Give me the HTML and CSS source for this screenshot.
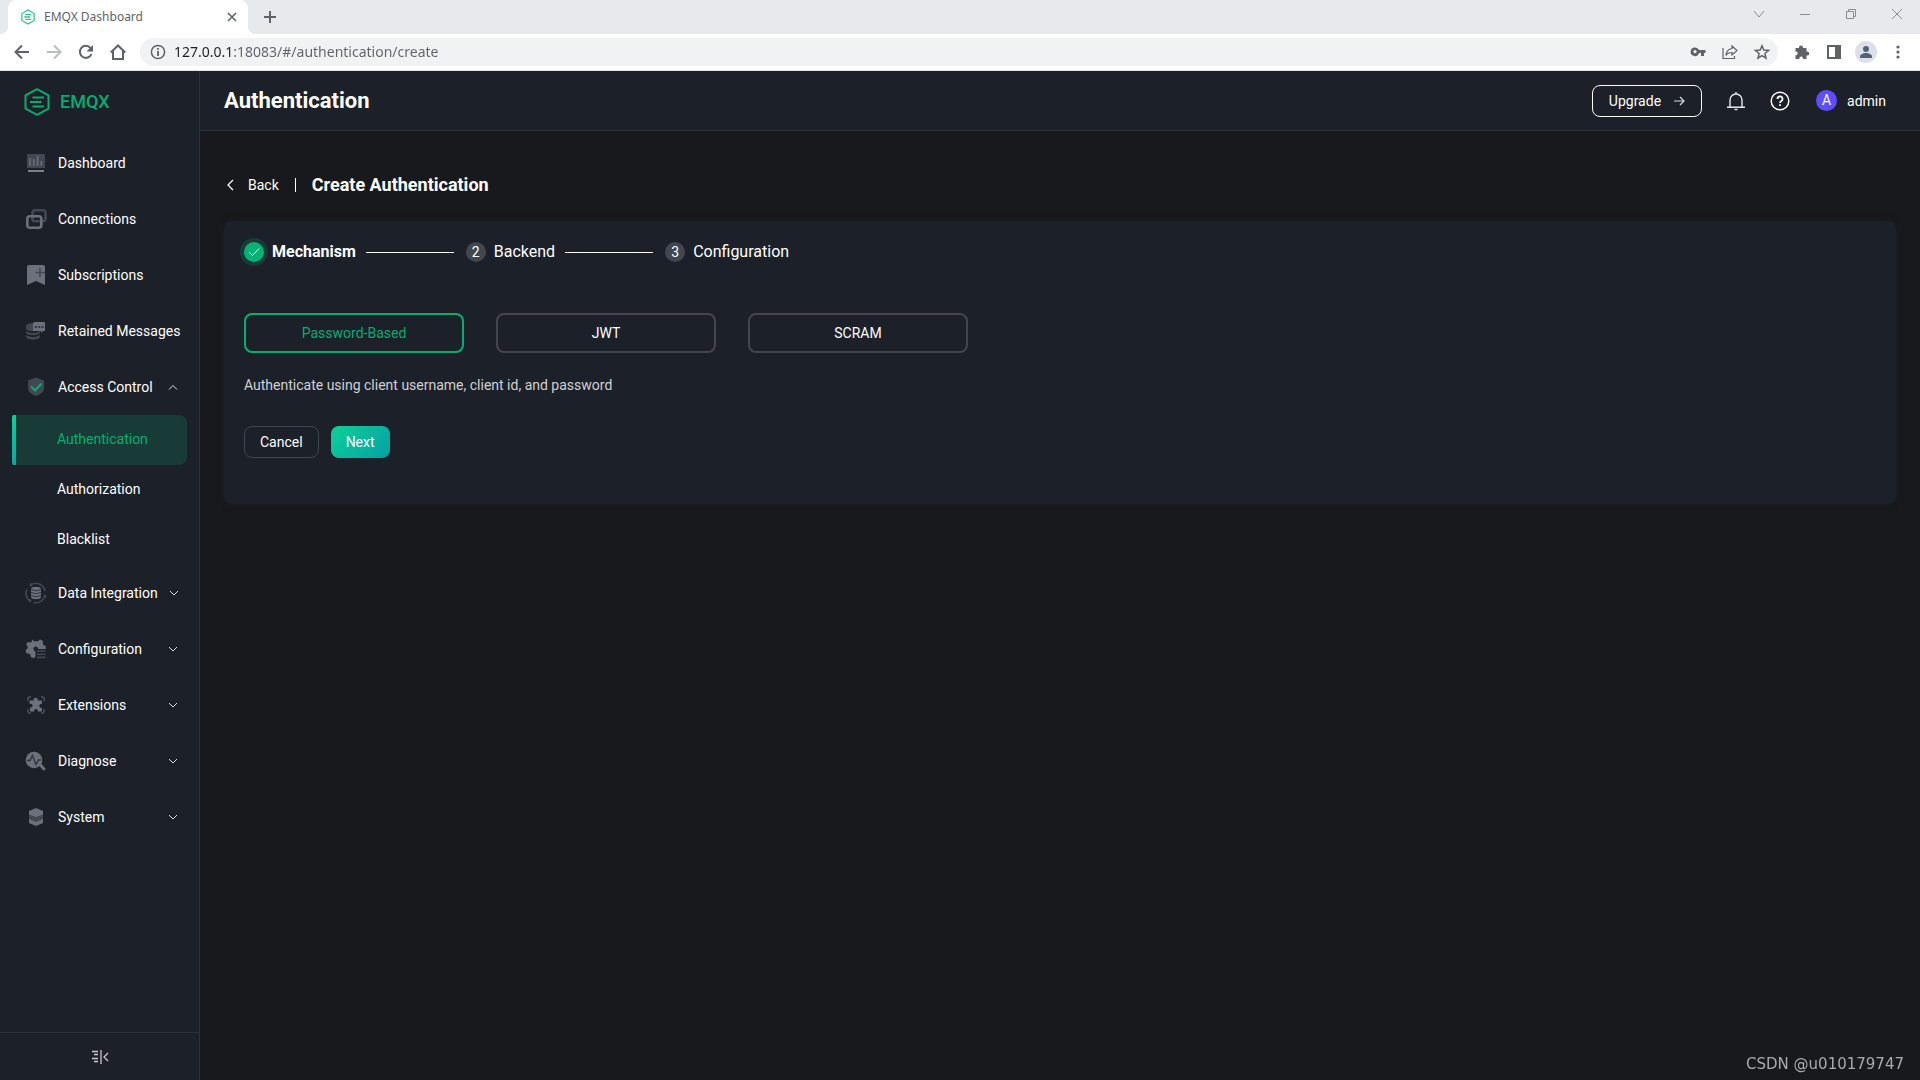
FILE: index.html
```html
<!DOCTYPE html>
<html lang="en">
<head>
    <meta charset="UTF-8">
    <meta name="viewport" content="width=device-width, initial-scale=1.0">
    <title>EMQX Dashboard</title>
    <link rel="stylesheet" href="styles.css">
</head>
<body>

<!-- Browser window -->
<div class="tab-strip">
    <div class="tab">
        <svg class="tab-icon" width="16" height="16" viewBox="0 0 28 30" fill="none" stroke="#34c38f" stroke-width="2.4"><path d="M14 2l11.500 6.500v13L14 28 2.500 21.500v-13z"/><path d="M9 10.500h11M7 15h11M9 19.500h11"/></svg>
        <span class="tab-title">EMQX Dashboard</span>
        <button type="button" class="icon-btn" aria-label="Close tab">
            <svg width="16" height="16" viewBox="0 0 16 16" stroke="#5f6368" stroke-width="1.600"><path d="M4 4l8 8M12 4l-8 8"/></svg>
        </button>
    </div>
    <button type="button" class="icon-btn new-tab" aria-label="New tab">
        <svg width="16" height="16" viewBox="0 0 16 16" stroke="#5f6368" stroke-width="2"><path d="M8 2v12M2 8h12"/></svg>
    </button>
    <div class="window-controls">
        <button type="button" class="icon-btn" aria-label="Search tabs"><svg width="12" height="12" viewBox="0 0 12 12" fill="none" stroke="#8a8c90"><path d="M1 3l5 6 5-6"/></svg></button>
        <button type="button" class="icon-btn" aria-label="Minimize"><svg width="12" height="12" viewBox="0 0 12 12" stroke="#8a8c90"><path d="M1 6.500h10"/></svg></button>
        <button type="button" class="icon-btn" aria-label="Restore"><svg width="12" height="12" viewBox="0 0 12 12" fill="none" stroke="#8a8c90"><path d="M1.500 3.500h7v7h-7zM3.500 3V1.500h7v7H9"/></svg></button>
        <button type="button" class="icon-btn" aria-label="Close"><svg width="12" height="12" viewBox="0 0 12 12" stroke="#8a8c90"><path d="M1 1l10 10M11 1L1 11"/></svg></button>
    </div>
</div>
<div class="toolbar">
    <button type="button" class="icon-btn" aria-label="Back"><svg width="16" height="16" viewBox="0 0 16 16" fill="none" stroke="#5f6368" stroke-width="2"><path d="M15 8H2M8 1.500L1.500 8 8 14.500"/></svg></button>
    <button type="button" class="icon-btn" aria-label="Forward"><svg width="16" height="16" viewBox="0 0 16 16" fill="none" stroke="#bbbdc0" stroke-width="2"><path d="M1 8h13M8 1.500L14.500 8 8 14.500"/></svg></button>
    <button type="button" class="icon-btn" aria-label="Reload"><svg width="16" height="16" viewBox="0 0 16 16" fill="none" stroke="#5f6368" stroke-width="2"><path d="M13.500 10A6 6 0 1 1 12.500 4"/><path d="M15 1v6.500H8.500z" fill="#5f6368" stroke="none"/></svg></button>
    <button type="button" class="icon-btn" aria-label="Home"><svg width="16" height="16" viewBox="0 0 16 16" fill="none" stroke="#5f6368" stroke-width="2"><path d="M.8 8.500L8 1.500l7.200 7M3 7v8h10V7"/></svg></button>
    <div class="address-bar">
        <svg width="16" height="16" viewBox="0 0 16 16" fill="none" stroke="#5f6368" stroke-width="1.500"><circle cx="8" cy="8" r="6.600"/><path d="M8 7v5M8 4v1.800" stroke-width="1.800"/></svg>
        <input type="text" class="url" aria-label="Address" value="127.0.0.1:18083/#/authentication/create">
        <button type="button" class="icon-btn" aria-label="Passwords"><svg width="16" height="16" viewBox="0 0 16 16"><path fill="#5f6368" fill-rule="evenodd" d="M5 3.500a4.300 4.300 0 0 1 4 2.500h6.500v3H14v3h-3V9H9a4.300 4.300 0 1 1-4-5.500zM5 6a1.600 1.600 0 1 0 0 3.200A1.600 1.600 0 0 0 5 6z"/></svg></button>
        <button type="button" class="icon-btn" aria-label="Share"><svg width="16" height="16" viewBox="0 0 16 16" fill="none" stroke="#5f6368" stroke-width="1.200"><path d="M1 4v10.500h11.500V12M10 2l5 4.500-5 4.500V8.500C7 8.500 5 9.500 4 11.500c.3-4 2.500-6.500 6-7z"/></svg></button>
        <button type="button" class="icon-btn" aria-label="Bookmark"><svg width="16" height="16" viewBox="0 0 16 16" fill="none" stroke="#5f6368" stroke-width="1.500"><path d="M8 1.800l1.800 4.300 4.700.4-3.600 3 1.100 4.600L8 11.600l-4 2.500 1.100-4.600-3.600-3 4.700-.4z"/></svg></button>
    </div>
    <button type="button" class="icon-btn" aria-label="Extensions"><svg width="16" height="16" viewBox="0 0 16 16"><path fill="#5f6368" d="M5 3.500a2 2 0 0 1 4 0V4h3.500v3.500h.8a2 2 0 0 1 0 4h-.8V15H9v-.8a1.800 1.800 0 0 0-3.600 0v.8H1.500v-3.800h.7a1.900 1.900 0 0 0 0-3.700h-.7V4H5z"/></svg></button>
    <button type="button" class="icon-btn" aria-label="Side panel"><svg width="16" height="16" viewBox="0 0 16 16"><path fill="#5f6368" fill-rule="evenodd" d="M1 1h14v14H1zM3 3v10h6V3z"/></svg></button>
    <button type="button" class="icon-btn profile" aria-label="Profile"><svg width="22" height="22" viewBox="0 0 22 22"><circle cx="11" cy="11" r="11" fill="#dde1e7"/><circle cx="11" cy="8" r="3" fill="#54607a"/><path d="M5 17v-1.500c0-2.200 3.500-3.500 6-3.500s6 1.300 6 3.500V17z" fill="#54607a"/></svg></button>
    <button type="button" class="icon-btn" aria-label="Menu"><svg width="16" height="16" viewBox="0 0 16 16" fill="#5f6368"><circle cx="8" cy="3" r="1.600"/><circle cx="8" cy="8" r="1.600"/><circle cx="8" cy="13" r="1.600"/></svg></button>
</div>

<!-- Dashboard -->
<div class="app">
    <aside class="sidebar">
        <a href="#" class="logo">
            <svg width="26" height="28" viewBox="0 0 26 28" fill="none" stroke="#07ad6f" stroke-width="2"><path d="M13 1.200l11.500 6.200v13.200L13 26.800 1.500 20.600V7.400z" stroke-linejoin="round"/><path d="M8.500 9.500H20M6 14h11.500M8.500 18.500H20"/></svg>
            <span>EMQX</span>
        </a>
        <nav class="menu">
            <a href="#" class="menu-item">
                <svg width="22" height="22" viewBox="0 0 22 22"><path fill="#434751" d="M3 2h16a1 1 0 0 1 1 1v13H2V3a1 1 0 0 1 1-1z"/><path stroke="#6c707a" stroke-width="1.600" d="M5 6v8M8.800 7v7M12.600 4v10M16.400 9v5"/><path stroke="#7b7f88" stroke-width="2" d="M3 19h16"/></svg>
                <span>Dashboard</span>
            </a>
            <a href="#" class="menu-item">
                <svg width="22" height="22" viewBox="0 0 22 22" fill="none" stroke-width="2.600"><rect x="7.500" y="2.300" width="13" height="11" rx="2.500" stroke="#434751"/><rect x="2.300" y="8.300" width="14" height="11.500" rx="2.500" stroke="#6c707a"/></svg>
                <span>Connections</span>
            </a>
            <a href="#" class="menu-item">
                <svg width="22" height="22" viewBox="0 0 22 22"><path fill="#6c707a" d="M4 1h14a2 2 0 0 1 2 2v18l-9-4-9 4V3a2 2 0 0 1 2-2z"/><path stroke="#434751" stroke-width="1.600" d="M15 4v9M10.500 8.500H20"/></svg>
                <span>Subscriptions</span>
            </a>
            <a href="#" class="menu-item">
                <svg width="22" height="22" viewBox="0 0 22 22"><path fill="#434751" d="M1 6c0-4 15-4 15 0v3c-1 3-14 3-15 0zM1 11c3 2.500 11 2.500 14 0v2c-2 3-12 3-14 0zM1 15c3 2.500 11 2.500 14 0v2c-1 3.500-13 3.500-14 0z"/><path fill="#6c707a" d="M10 2h9a1 1 0 0 1 1 1v8h-2l-2 2v-2H8V4a2 2 0 0 1 2-2z"/><path fill="#323640" d="M10 6h2v2h-2zM13.300 6h2v2h-2zM16.600 6h2v2h-2z"/></svg>
                <span>Retained Messages</span>
            </a>
            <button type="button" class="menu-item" aria-expanded="true">
                <svg width="22" height="22" viewBox="0 0 22 22"><path fill="#434751" d="M11 1.500l8 3V12c0 4-4 6.500-8 8-4-1.500-8-4-8-8V4.500z"/><path fill="none" stroke="#07ad6f" stroke-width="2" d="M6 10.500l4 4 6.500-7"/></svg>
                <span>Access Control</span>
                <svg class="arrow" width="10" height="10" viewBox="0 0 10 10"><path d="M1 7.500l4-4 4 4"/></svg>
            </button>
            <div class="submenu">
                <a href="#" class="submenu-item active">Authentication</a>
                <a href="#" class="submenu-item">Authorization</a>
                <a href="#" class="submenu-item">Blacklist</a>
            </div>
            <button type="button" class="menu-item">
                <svg width="22" height="22" viewBox="0 0 22 22" fill="none"><path stroke="#434751" stroke-width="1.600" d="M6 2.700A9.500 9.500 0 0 1 20.200 9M20.200 13A9.500 9.500 0 0 1 9 20.600M5 19A9.500 9.500 0 0 1 2 7"/><circle cx="6" cy="2.700" r="1.500" fill="#434751"/><circle cx="20" cy="14" r="1.500" fill="#434751"/><circle cx="5" cy="18.500" r="1.500" fill="#434751"/><path fill="#6c707a" d="M6 7c0-3 10-3 10 0v8c0 3-10 3-10 0z"/><path stroke="#323640" d="M6 7.500q5 2.500 10 0M6 10.500q5 2.500 10 0M6 13.500q5 2.500 10 0"/></svg>
                <span>Data Integration</span>
                <svg class="arrow" width="10" height="10" viewBox="0 0 10 10"><path d="M1 3l4 4 4-4"/></svg>
            </button>
            <button type="button" class="menu-item">
                <svg width="22" height="22" viewBox="0 0 22 22"><path fill="#6c707a" d="M7 1.500l2 1.800h4l2-1.800 3 1.600-.3 2.700 1.300 1.700 1.800.6V11h-7.600a2.400 2.400 0 1 0-2.700 2.400v5.200l-1.700 1.600-3-1.200-.4-2.300-1.600-1.200-2.600-.3-.6-3.200 2-1.600V8.200L1.200 6.500 2.800 4l2.600.5 1.400-1z"/><path stroke="#434751" stroke-width="1.600" d="M12 13h8.500M12 16.200h8.500M12 19.400h8.500"/></svg>
                <span>Configuration</span>
                <svg class="arrow" width="10" height="10" viewBox="0 0 10 10"><path d="M1 3l4 4 4-4"/></svg>
            </button>
            <button type="button" class="menu-item">
                <svg width="22" height="22" viewBox="0 0 22 22"><path fill="none" stroke="#434751" stroke-width="1.800" d="M6 3H4.500A1.500 1.500 0 0 0 3 4.500V7M16 3h1.500A1.500 1.500 0 0 1 19 4.500V7M3 15v2.500A1.500 1.500 0 0 0 4.500 19H6M16 19h1.500a1.500 1.500 0 0 0 1.500-1.500V15"/><path fill="#6c707a" d="M8.500 6a2.200 2.200 0 0 1 4.400 0v.5h4V10h-.7a1.900 1.900 0 0 0 0 3.800h.7v3.700h-4v-.7a1.900 1.900 0 0 0-3.800 0v.7H5v-4h.7a1.900 1.900 0 0 0 0-3.800H4.500V6.500h4z"/></svg>
                <span>Extensions</span>
                <svg class="arrow" width="10" height="10" viewBox="0 0 10 10"><path d="M1 3l4 4 4-4"/></svg>
            </button>
            <button type="button" class="menu-item">
                <svg width="22" height="22" viewBox="0 0 22 22" fill="none"><circle cx="9" cy="10" r="8.300" fill="#6c707a"/><path stroke="#6c707a" stroke-width="3" stroke-linecap="round" d="M15 14.500l4 4.500"/><path stroke="#323640" stroke-width="1.500" d="M2 10.500h3l2.500-5 3.500 9 2.500-4.500H16"/></svg>
                <span>Diagnose</span>
                <svg class="arrow" width="10" height="10" viewBox="0 0 10 10"><path d="M1 3l4 4 4-4"/></svg>
            </button>
            <button type="button" class="menu-item">
                <svg width="22" height="22" viewBox="0 0 22 22"><path fill="#434751" d="M4 7h14v8l-7 3-7-3z"/><path fill="#6c707a" d="M11 2l7 3v3.500L11 11 4 8.500V5zM4 13l7 3 7-3v4l-7 3-7-3z"/></svg>
                <span>System</span>
                <svg class="arrow" width="10" height="10" viewBox="0 0 10 10"><path d="M1 3l4 4 4-4"/></svg>
            </button>
        </nav>
        <button type="button" class="collapse" aria-label="Collapse menu">
            <svg width="18" height="16" viewBox="0 0 18 16" fill="none" stroke="#c8cacd" stroke-width="1.300"><path d="M1 2.500h6M3 5.500h4M1 9.500h6M3 12.500h4M10 1v14M17 4l-4 4 4 4"/></svg>
        </button>
    </aside>

    <div class="content">
        <header class="header">
            <h1>Authentication</h1>
            <div class="header-right">
                <button type="button" class="btn btn-upgrade">
                    <span>Upgrade</span>
                    <svg width="12" height="12" viewBox="0 0 12 12" fill="none" stroke="#d8d9da" stroke-width="1.200"><path d="M1 6h10M7 2l4 4-4 4"/></svg>
                </button>
                <button type="button" class="icon-btn" aria-label="Alarms">
                    <svg width="20" height="20" viewBox="0 0 20 20" fill="none" stroke="#e8e8e9" stroke-width="1.400"><path d="M4 16V9a6 6 0 0 1 12 0v7M1 16.200h18M10 1v2"/><path d="M8.500 18.500h3"/></svg>
                </button>
                <button type="button" class="icon-btn" aria-label="Help">
                    <svg width="20" height="20" viewBox="0 0 20 20" fill="none" stroke="#fff" stroke-width="1.500"><circle cx="10" cy="10" r="8.800"/><path d="M7.500 8a2.500 2.500 0 1 1 3.600 2.200q-1.100.6-1.100 1.800M10 13.200v1.800" stroke-width="1.800"/></svg>
                </button>
                <a href="#" class="user"><span class="avatar">A</span>admin</a>
            </div>
        </header>

        <main class="main">
            <div class="page-head">
                <a href="#" class="back">
                    <svg width="12" height="12" viewBox="0 0 12 12" fill="none" stroke="#fff" stroke-width="1.300"><path d="M9 1L4 6l5 5"/></svg>
                    <span>Back</span>
                </a>
                <span class="divider"></span>
                <h2>Create Authentication</h2>
            </div>

            <form class="card">
                <ol class="steps">
                    <li class="step current">
                        <span class="step-icon"><svg width="12" height="12" viewBox="0 0 12 12" fill="none" stroke="#fff"><path d="M1 6l3.500 3.500L11 2.500"/></svg></span>
                        <span>Mechanism</span>
                    </li>
                    <li class="step">
                        <span class="step-icon">2</span>
                        <span>Backend</span>
                    </li>
                    <li class="step">
                        <span class="step-icon">3</span>
                        <span>Configuration</span>
                    </li>
                </ol>
                <div class="mechanisms">
                    <label class="mechanism"><input type="radio" name="mechanism" value="password" checked>Password-Based</label>
                    <label class="mechanism"><input type="radio" name="mechanism" value="jwt">JWT</label>
                    <label class="mechanism"><input type="radio" name="mechanism" value="scram">SCRAM</label>
                </div>
                <p class="description">Authenticate using client username, client id, and password</p>
                <div class="actions">
                    <button type="button" class="btn">Cancel</button>
                    <button type="button" class="btn btn-primary">Next</button>
                </div>
            </form>
        </main>
    </div>
</div>

<div class="watermark">CSDN @u010179747</div>
</body>
</html>
```

FILE: styles.css
```css
*,
*::before,
*::after {
    box-sizing: border-box;
}

body {
    display: flex;
    flex-direction: column;
    min-height: 100vh;
    margin: 0;
    font-family: Roboto, Arial, sans-serif;
    font-size: 14px;
    line-height: 20px;
    color: #fff;
    background-color: #18191c;
}

a {
    color: inherit;
    text-decoration: none;
}

button,
input {
    font: inherit;
    color: inherit;
}

button {
    cursor: pointer;
}

svg {
    display: block;
    flex-shrink: 0;
}

h1,
h2,
p,
ol {
    margin: 0;
    padding: 0;
}

.icon-btn {
    padding: 0;
    border: none;
    background: none;
}

/* Browser window */
.tab-strip {
    display: flex;
    height: 34px;
    padding-left: 8px;
    background-color: #e8e9ed;
}

.tab {
    position: relative;
    display: flex;
    align-items: center;
    gap: 8px;
    width: 240px;
    padding: 0 8px 0 12px;
    border-radius: 8px 8px 0 0;
    background-color: #fff;
}

/* curved feet of the tab */
.tab::before,
.tab::after {
    content: "";
    position: absolute;
    bottom: 0;
    width: 8px;
    height: 8px;
}

.tab::before {
    left: -8px;
    background: radial-gradient(circle at 0 0, transparent 8px, #fff 8px);
}

.tab::after {
    right: -8px;
    background: radial-gradient(circle at 100% 0, transparent 8px, #fff 8px);
}

.tab-title {
    flex: 1;
    font-family: "Noto Sans", sans-serif;
    font-size: 12px;
    color: #5f6368;
}

.new-tab {
    margin-left: 14px;
}

.window-controls {
    display: flex;
    align-items: center;
    gap: 34px;
    height: 28px;
    margin-left: auto;
    padding-right: 17px;
}

.toolbar {
    display: flex;
    align-items: center;
    gap: 16px;
    height: 37px;
    padding: 0 14px;
    border-bottom: 1px solid #dde3df;
    background-color: #fff;
}

.address-bar {
    display: flex;
    flex: 1;
    align-items: center;
    gap: 16px;
    height: 28px;
    margin-left: -2px;
    padding: 0 8px 0 10px;
    border-radius: 14px;
    background-color: #f1f2f4;
}

.url {
    flex: 1;
    margin-left: -8px;
    padding: 0;
    border: none;
    outline: none;
    font-family: "Noto Sans", sans-serif;
    /* host darker than the path */
    background: linear-gradient(to right, #202124 60px, #5f6368 60px);
    -webkit-background-clip: text;
    background-clip: text;
    -webkit-text-fill-color: transparent;
}

.profile {
    margin: 0 -3px;
}

/* Layout */
.app {
    display: flex;
    flex: 1;
}

.sidebar {
    display: flex;
    flex-direction: column;
    width: 200px;
    border-right: 1px solid #2d3138;
    background-color: #1c2028;
}

.logo {
    display: flex;
    align-items: center;
    gap: 10px;
    height: 62px;
    padding-left: 24px;
    font-size: 18px;
    font-weight: 500;
    color: #07ad6f;
}

.menu {
    flex: 1;
    padding-top: 2px;
}

.menu-item {
    display: flex;
    align-items: center;
    gap: 11px;
    width: 100%;
    height: 56px;
    padding: 0 21px 0 25px;
    border: none;
    background: none;
    white-space: nowrap;
}

.menu-item span {
    padding-bottom: 1px;
}

.arrow {
    margin-left: auto;
    fill: none;
    stroke: #e0e1e2;
}

.submenu-item {
    display: flex;
    align-items: center;
    height: 50px;
    margin: 0 12px;
    padding: 0 0 2px 45px;
}

.submenu-item.active {
    padding-left: 41px;
    border-left: 4px solid;
    border-image: linear-gradient(#0ed193, #05a8a5) 1;
    background-color: #183b38;
    color: #07ad6f;
    clip-path: inset(0 round 2px 8px 8px 2px);
}

.collapse {
    display: flex;
    justify-content: center;
    align-items: center;
    height: 48px;
    border: none;
    border-top: 1px solid #2d3138;
    background: none;
}

.content {
    flex: 1;
}

.header {
    display: flex;
    justify-content: space-between;
    align-items: center;
    height: 60px;
    padding: 0 34px 0 24px;
    border-bottom: 1px solid #2d3138;
    background-color: #1c2028;
}

.header h1 {
    font-size: 22px;
    font-weight: 700;
}

.header-right {
    display: flex;
    align-items: center;
    gap: 24px;
}

.user {
    display: flex;
    align-items: center;
    gap: 10px;
    margin-left: 2px;
}

.avatar {
    width: 21px;
    height: 21px;
    border-radius: 50%;
    background-color: #5e4eff;
    line-height: 21px;
    text-align: center;
}

.btn {
    display: flex;
    align-items: center;
    gap: 12px;
    height: 32px;
    padding: 0 15px;
    border: 1px solid #43464e;
    border-radius: 8px;
    background: none;
}

.btn-upgrade {
    padding: 0 16px;
    border-color: #fff;
}

.btn-primary {
    border: none;
    background: linear-gradient(135deg, #0ed193, #05a0a8);
}

.main {
    padding: 40px 24px;
}

.page-head {
    display: flex;
    align-items: center;
    height: 28px;
    margin-bottom: 22px;
}

.back {
    display: flex;
    align-items: center;
    gap: 12px;
}

.divider {
    width: 1px;
    height: 14px;
    margin: 0 16px;
    background-color: #fff;
}

.page-head h2 {
    font-size: 18px;
    font-weight: 700;
}

.card {
    padding: 20px 20px 46px;
    border-radius: 8px;
    background-color: #1c2028;
    box-shadow: 0 0 6px rgba(28, 32, 40, 0.6);
}

.steps {
    display: flex;
    align-items: center;
    list-style: none;
    font-size: 16px;
    line-height: 22px;
}

.step {
    display: flex;
    align-items: center;
    gap: 8px;
}

.step:not(:last-child)::after {
    content: "";
    width: 88px;
    height: 1px;
    margin-right: 12px;
    margin-left: 2px;
    background-color: #fff;
}

.step-icon {
    display: flex;
    justify-content: center;
    align-items: center;
    width: 20px;
    height: 20px;
    border-radius: 50%;
    background-color: #43464e;
    font-size: 14px;
    line-height: 20px;
}

.step.current {
    font-weight: 700;
}

.step.current .step-icon {
    background-color: #07b374;
    box-shadow: 0 0 0 4px #183b38;
}

.mechanisms {
    display: flex;
    gap: 32px;
    margin-top: 50px;
}

.mechanism {
    width: 220px;
    height: 40px;
    border: 2px solid #43464e;
    border-radius: 8px;
    line-height: 36px;
    text-align: center;
    cursor: pointer;
}

.mechanism input {
    position: absolute;
    opacity: 0;
}

.mechanism:has(input:checked) {
    border-color: #07ad6f;
    color: #07ad6f;
}

.description {
    margin: 22px 0 31px;
    color: #d0d1d3;
}

.actions {
    display: flex;
    gap: 12px;
}

.watermark {
    position: fixed;
    right: 16px;
    bottom: 6px;
    font-family: "DejaVu Sans", sans-serif;
    font-size: 15px;
    color: #a9aaac;
}
```
